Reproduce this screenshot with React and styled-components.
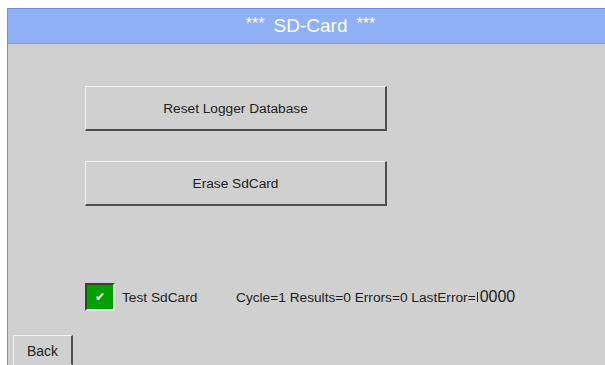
import styled, { createGlobalStyle } from "styled-components";

const GlobalStyle = createGlobalStyle`
  html, body {
    margin: 0;
    padding: 0;
    background: #fff;
  }
  body {
    font-family: "Liberation Sans", Arial, sans-serif;
  }
`;

const Frame = styled.div`
  width: 605px;
  height: 365px;
  padding: 8px 0 0 7px;
  box-sizing: border-box;
  background: #fff;
  overflow: hidden;
`;

const Panel = styled.div`
  height: 100%;
  display: flex;
  flex-direction: column;
  border-left: 1px solid #6e9cc4;
  background: #d0d0d0;
`;

const Header = styled.header`
  height: 34px;
  flex: none;
  display: flex;
  align-items: center;
  justify-content: center;
  gap: 9px;
  padding-left: 8px;
  background: #8fb0f5;
  border-top: 1px solid #6f8ed6;
  border-bottom: 1px solid #9a9eaa;
  color: #fff;
`;

const Stars = styled.span`
  font-size: 16px;
  padding-bottom: 5px;
`;

const Title = styled.span`
  font-size: 19px;
`;

const Content = styled.main`
  flex: 1;
  display: flex;
  flex-direction: column;
  padding: 42px 0 0 77px;
`;

const ActionButton = styled.button`
  width: 302px;
  height: 45px;
  margin-bottom: ${(p) => p.$gap || 0}px;
  box-sizing: border-box;
  background: #d0d0d0;
  border: 2px solid;
  border-color: #f2f2f2 #4e4e4e #4e4e4e #f2f2f2;
  border-top-width: 1px;
  border-left-width: 1px;
  font-family: "Liberation Sans", Arial, sans-serif;
  font-size: 13.7px;
  color: #222;
  padding: 0;
`;

const TestRow = styled.div`
  display: flex;
  align-items: center;
  margin-top: 77px;
  color: #1e1e1e;
  font-size: 13.7px;
`;

const CheckBox = styled.div`
  width: 30px;
  height: 28px;
  box-sizing: border-box;
  background: #00a000;
  border: 2px solid;
  border-color: #2e4a2e #e6e6e6 #e6e6e6 #2e4a2e;
  display: flex;
  align-items: center;
  justify-content: center;
  color: #fff;
  font-family: "DejaVu Sans", sans-serif;
  font-size: 12px;
`;

const Label = styled.span`
  margin-left: 7px;
  width: 114px;
`;

const Status = styled.span`
  display: flex;
  align-items: baseline;
`;

const Code = styled.span`
  font-size: 16px;
  margin-left: 1px;
  padding-left: 2px;
  border-left: 1px solid #222;
  line-height: 10px;
`;

const Footer = styled.div`
  flex: none;
  height: 30px;
  padding-left: 5px;
  display: flex;
  align-items: flex-end;
`;

const BackButton = styled.button`
  width: 60px;
  height: 30px;
  box-sizing: border-box;
  background: #d0d0d0;
  border: 1px solid;
  border-color: #f2f2f2 #4e4e4e transparent #f2f2f2;
  border-right-width: 2px;
  font-family: "Liberation Sans", Arial, sans-serif;
  font-size: 14px;
  color: #222;
  padding: 2px 0 0;
`;

export default function App() {
  return (
    <>
      <GlobalStyle />
      <Frame>
        <Panel>
          <Header>
            <Stars>***</Stars>
            <Title>SD-Card</Title>
            <Stars>***</Stars>
          </Header>
          <Content>
            <ActionButton $gap={30}>Reset Logger Database</ActionButton>
            <ActionButton>Erase SdCard</ActionButton>
            <TestRow>
              <CheckBox>✔</CheckBox>
              <Label>Test SdCard</Label>
              <Status>
                Cycle=1 Results=0 Errors=0 LastError=
                <Code>0000</Code>
              </Status>
            </TestRow>
          </Content>
          <Footer>
            <BackButton>Back</BackButton>
          </Footer>
        </Panel>
      </Frame>
    </>
  );
}
